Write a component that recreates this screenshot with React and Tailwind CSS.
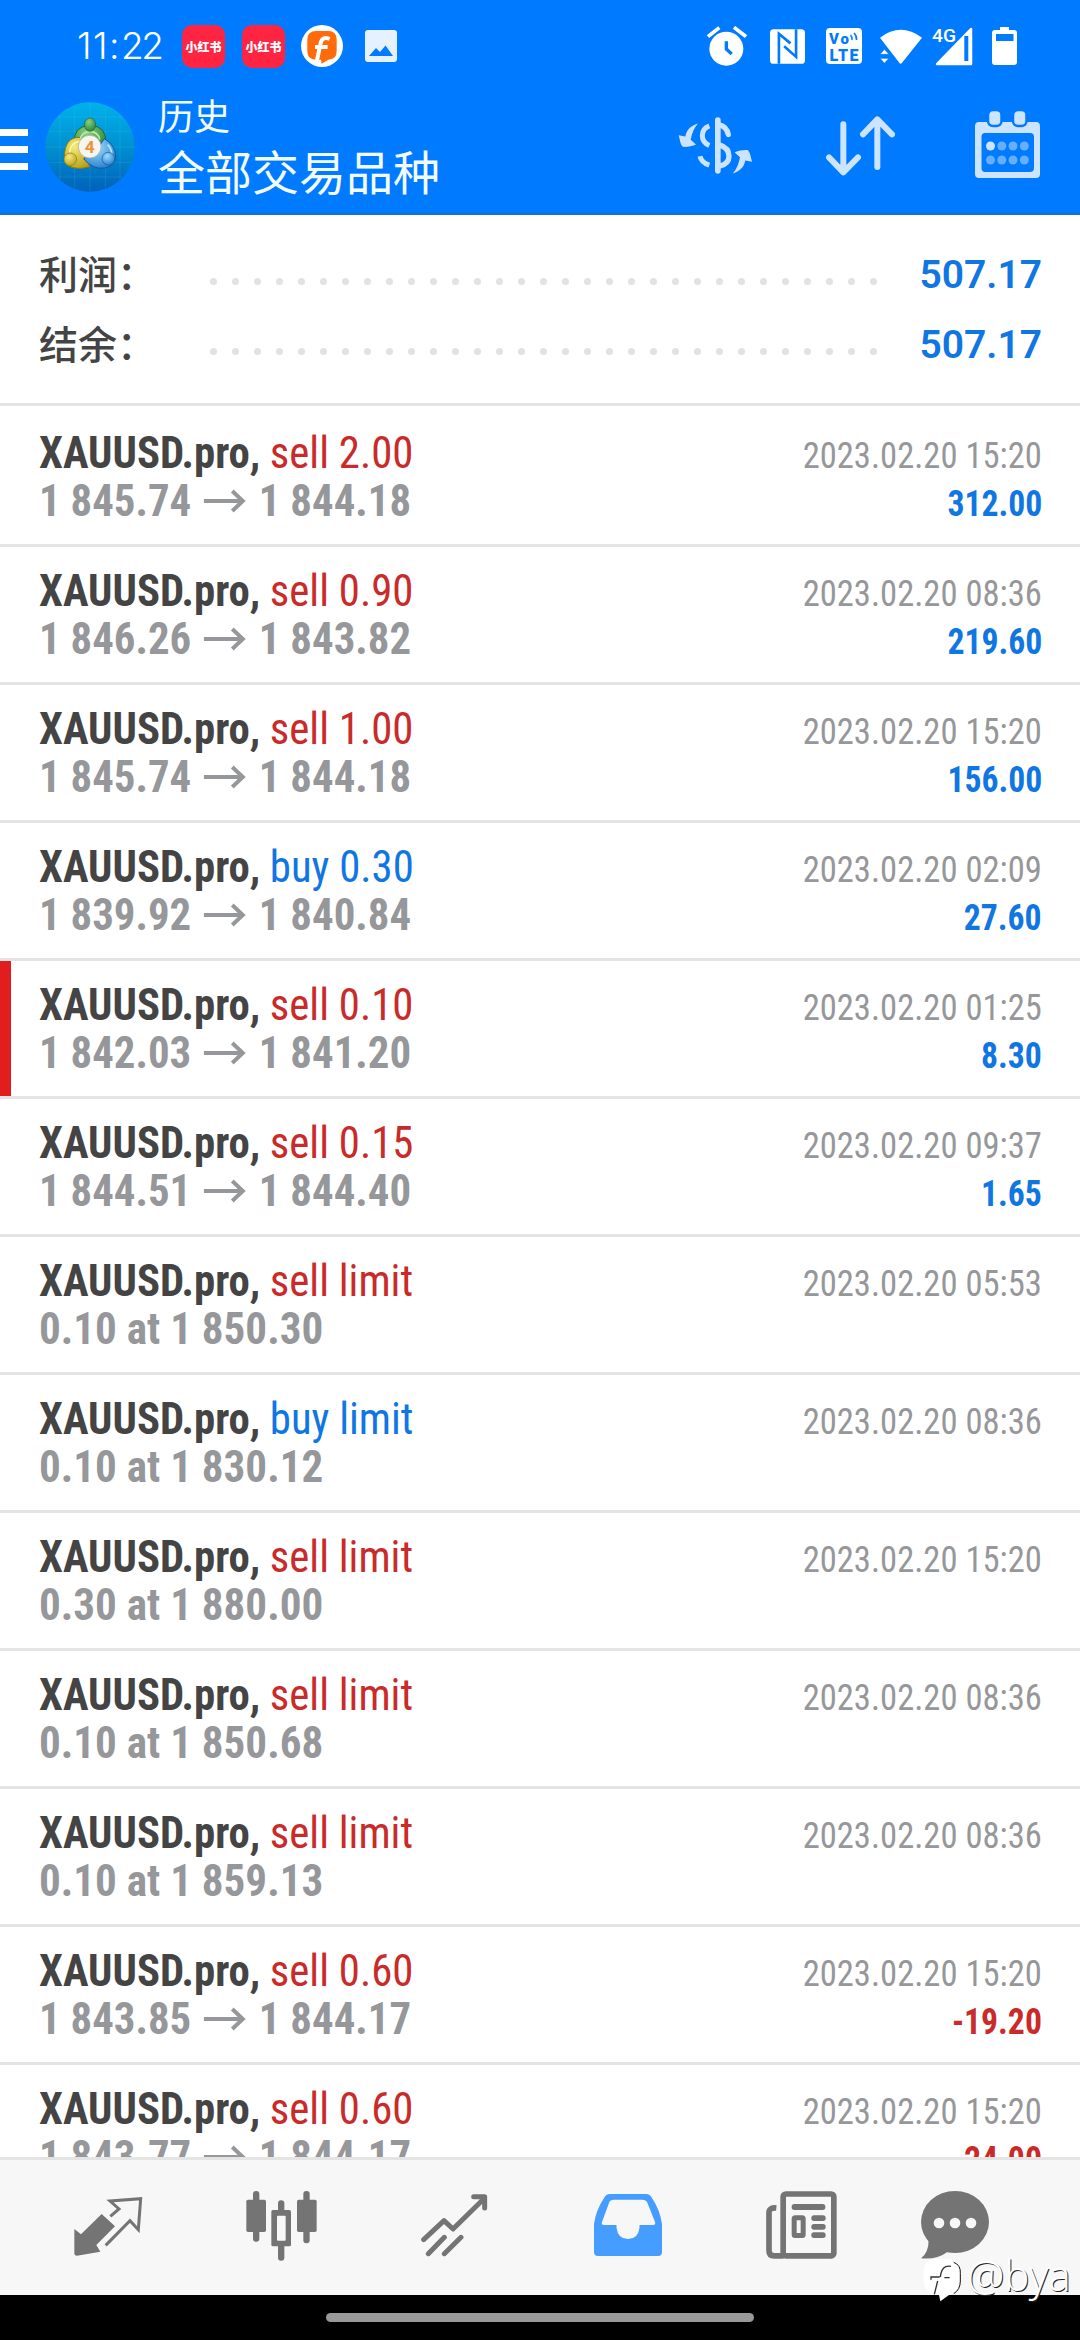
const deals = [
  { type: "sell 2.00", side: "sell", from: "1 845.74", to: "1 844.18", time: "2023.02.20 15:20", profit: "312.00" },
  { type: "sell 0.90", side: "sell", from: "1 846.26", to: "1 843.82", time: "2023.02.20 08:36", profit: "219.60" },
  { type: "sell 1.00", side: "sell", from: "1 845.74", to: "1 844.18", time: "2023.02.20 15:20", profit: "156.00" },
  { type: "buy 0.30", side: "buy", from: "1 839.92", to: "1 840.84", time: "2023.02.20 02:09", profit: "27.60" },
  { type: "sell 0.10", side: "sell", from: "1 842.03", to: "1 841.20", time: "2023.02.20 01:25", profit: "8.30", marked: true },
  { type: "sell 0.15", side: "sell", from: "1 844.51", to: "1 844.40", time: "2023.02.20 09:37", profit: "1.65" },
  { type: "sell limit", side: "sell", order: "0.10 at 1 850.30", time: "2023.02.20 05:53" },
  { type: "buy limit", side: "buy", order: "0.10 at 1 830.12", time: "2023.02.20 08:36" },
  { type: "sell limit", side: "sell", order: "0.30 at 1 880.00", time: "2023.02.20 15:20" },
  { type: "sell limit", side: "sell", order: "0.10 at 1 850.68", time: "2023.02.20 08:36" },
  { type: "sell limit", side: "sell", order: "0.10 at 1 859.13", time: "2023.02.20 08:36" },
  { type: "sell 0.60", side: "sell", from: "1 843.85", to: "1 844.17", time: "2023.02.20 15:20", profit: "-19.20" },
  { type: "sell 0.60", side: "sell", from: "1 843.77", to: "1 844.17", time: "2023.02.20 15:20", profit: "-24.00" },
];

const summary = [
  { label: "利润：", value: "507.17" },
  { label: "结余：", value: "507.17" },
];

function RedNote() {
  return (
    <div className="w-[43px] h-[43px] rounded-[10px] bg-[#ff2442] flex items-center justify-center text-white text-[12px] leading-none font-black whitespace-nowrap font-['Noto_Sans_CJK_SC',sans-serif]">
      小红书
    </div>
  );
}

function StatusBar() {
  return (
    <div className="h-[92px] flex items-start text-white">
      <div className="w-[105px] ml-[77px] mt-[23px] flex items-center text-[37px] leading-[46px] font-light font-['Inter','Noto_Sans',sans-serif]">
        <span className="tracking-[1.5px]">11:</span>
        <span className="-tracking-[2.5px]">22</span>
      </div>
      <div className="mt-[25px]"><RedNote /></div>
      <div className="mt-[25px] ml-[17px]"><RedNote /></div>
      <svg className="w-[42px] h-[42px] mt-[25px] ml-[16px]" viewBox="0 0 126 126">
        <circle cx="63" cy="63" r="63" fill="#fff" />
        <path d="M46 18H82Q107 18 107 44V78Q107 104 82 104L62 116L60 104H44Q19 104 19 78V44Q19 18 46 18Z" fill="#ff6a0a" />
        <path d="M86 42Q62 32 58 58L48 106M42 66H80" fill="none" stroke="#fff" strokeWidth="12" />
      </svg>
      <svg className="w-[32px] h-[32px] mt-[30px] ml-[22px]" viewBox="0 0 32 32">
        <rect width="32" height="32" rx="3" fill="#e6f1ff" />
        <path d="M4 26L11 18L15 22L20.500 15.500L28 26Z" fill="#007aff" />
      </svg>
      <svg className="w-[40px] h-[40px] mt-[26px] ml-[310px]" viewBox="0 0 120 120">
        <circle cx="58" cy="68" r="51" fill="#fff" />
        <path d="M3 32L37 5M81 4L117 32" stroke="#fff" strokeWidth="11" />
        <path d="M58 46V69L74 84" fill="none" stroke="#007aff" strokeWidth="10" />
      </svg>
      <svg className="w-[35px] h-[35px] mt-[29px] ml-[23px]" viewBox="0 0 106 105">
        <rect width="106" height="105" rx="11" fill="#fff" />
        <path d="M27 105V14L62 43M43 52L79 84V0" fill="none" stroke="#007aff" strokeWidth="8" />
      </svg>
      <svg className="w-[36px] h-[36px] mt-[28px] ml-[21px]" viewBox="0 0 36 36">
        <rect width="36" height="36" rx="4" fill="#fff" />
        <g className="font-['Roboto',sans-serif] font-black" fill="#007aff">
          <text x="3" y="15.500" fontSize="15" textLength="20">Vo</text>
          <text x="3.500" y="32.500" fontSize="16" textLength="29">LTE</text>
        </g>
        <path d="M24.500 7Q26.500 9 26 12M28 5Q31 8 30.500 12" fill="none" stroke="#007aff" strokeWidth="1.600" />
      </svg>
      <svg className="w-[42px] h-[36px] mt-[28px] ml-[18px]" viewBox="0 0 126 108">
        <path d="M0 29Q62 -18 126 29L65 106Q62 108 59 106Z" fill="#fff" />
        <path d="M0 79L13 64L27 79ZM0 91H27L13 106Z" fill="#fff" stroke="#007aff" strokeWidth="2" />
      </svg>
      <svg className="w-[41px] h-[40px] mt-[26px] ml-[10px]" viewBox="0 0 41 40">
        <text x="0" y="15.500" fontSize="18" textLength="24" lengthAdjust="spacingAndGlyphs" fill="#fff" className="font-['Roboto',sans-serif] font-medium">4G</text>
        <path d="M5 38L39 3V38Z" fill="#fff" stroke="#fff" strokeWidth="2.500" strokeLinejoin="round" />
        <path d="M34.300 10V35" stroke="#007aff" strokeWidth="4" />
      </svg>
      <svg className="w-[25px] h-[38px] mt-[27px] ml-[19px]" viewBox="0 0 25 38">
        <path d="M8 0H17V3H22Q25 3 25 6V35Q25 38 22 38H3Q0 38 0 35V6Q0 3 3 3H8Z" fill="#fff" />
        <rect x="4" y="7" width="17.500" height="7" fill="#007aff" />
      </svg>
    </div>
  );
}

function Logo() {
  return (
    <svg className="w-[90px] h-[90px]" viewBox="0 0 270 270">
      <defs>
        <linearGradient id="bg" x1="0" y1="0" x2="0" y2="1">
          <stop offset="0" stopColor="#00b2ea" />
          <stop offset="0.5" stopColor="#0090d2" />
          <stop offset="1" stopColor="#0061b8" />
        </linearGradient>
        <radialGradient id="green" cx="0.4" cy="0.3" r="0.8">
          <stop offset="0" stopColor="#8fd080" />
          <stop offset="1" stopColor="#1f7d33" />
        </radialGradient>
        <radialGradient id="yellow" cx="0.4" cy="0.3" r="0.8">
          <stop offset="0" stopColor="#f5ea7c" />
          <stop offset="1" stopColor="#b59c12" />
        </radialGradient>
        <radialGradient id="blue" cx="0.4" cy="0.3" r="0.8">
          <stop offset="0" stopColor="#9fdcff" />
          <stop offset="1" stopColor="#1d78c8" />
        </radialGradient>
      </defs>
      <circle cx="135" cy="135" r="134" fill="url(#bg)" />
      <path d="M45 38V232M89 12V258M135 2V268M181 12V258M225 38V232M38 45H232M12 89H258M2 135H268M12 181H258M38 225H232" stroke="#5cc4f0" strokeOpacity="0.35" strokeWidth="1.500" />
      <path d="M88 124Q84 72 135 70Q186 72 182 124L168 146H106Z" fill="url(#green)" stroke="#1c6a35" strokeWidth="3" />
      <path d="M106 106Q72 104 62 136Q52 172 66 190Q96 206 134 194L120 150Z" fill="url(#yellow)" stroke="#8a7a10" strokeWidth="3" />
      <path d="M178 110Q210 128 212 162Q212 190 180 198Q142 204 116 170L150 150Z" fill="url(#blue)" stroke="#135a9c" strokeWidth="3" />
      <path d="M106 112Q110 90 135 88Q160 90 164 112" fill="none" stroke="#b8e8a8" strokeWidth="5" />
      <path d="M74 152Q76 122 104 118" fill="none" stroke="#fff7a8" strokeWidth="5" />
      <path d="M188 128Q202 144 200 160" fill="none" stroke="#b8e6ff" strokeWidth="5" />
      <ellipse cx="135" cy="68" rx="17" ry="20" fill="url(#green)" stroke="#1c6a35" strokeWidth="2" />
      <circle cx="76" cy="172" r="19" fill="url(#yellow)" stroke="#8a7a10" strokeWidth="2" />
      <circle cx="190" cy="170" r="19" fill="url(#blue)" stroke="#135a9c" strokeWidth="2" />
      <circle cx="134" cy="134" r="34" fill="#f7f5f0" stroke="#a5a99a" strokeWidth="2" />
      <text x="134" y="152" fontSize="52" textAnchor="middle" fill="#f0913a" className="font-['Roboto',sans-serif] font-bold">4</text>
    </svg>
  );
}

function Header() {
  return (
    <div className="h-[123px] flex items-start border-b-2 border-[#1670d6]">
      <div className="w-[28px] mt-[37px] flex flex-col gap-[10px]">
        <div className="h-[7px] bg-white"></div>
        <div className="h-[7px] bg-white"></div>
        <div className="h-[7px] bg-white"></div>
      </div>
      <div className="ml-[17px] mt-[10px]"><Logo /></div>
      <div className="ml-[23px] w-[520px] text-[#f2fcff] font-['Noto_Sans_CJK_SC',sans-serif]">
        <p className="mt-[2px] text-[36px] leading-[40px]">历史</p>
        <p className="mt-[6px] text-[47px] leading-[60px]">全部交易品种</p>
      </div>
      <svg className="w-[74px] h-[57px] mt-[25px]" viewBox="24 36 222 170">
        <g fill="none" stroke="#cce4ff">
          <path d="M143.500 45V197" strokeWidth="17" strokeLinecap="round" />
          <path d="M148 59Q170 64 175 88" strokeWidth="16" strokeLinecap="round" />
          <path d="M148 119Q177 128 177 153Q177 176 148 183" strokeWidth="16" />
          <path d="M118 62Q97 70 97 91Q97 112 118 121" strokeWidth="15" />
          <path d="M90 153Q94 172 118 180" strokeWidth="15" />
        </g>
        <g fill="#cce4ff">
          <path d="M84 55C66 60 50 72 46 94L26 90C30 104 30 116 38 125C50 126 66 124 78 118L62 104C66 84 72 68 84 55Z" />
          <path d="M84 55C66 60 50 72 46 94L26 90C30 104 30 116 38 125C50 126 66 124 78 118L62 104C66 84 72 68 84 55Z" transform="rotate(180 136 130)" />
        </g>
      </svg>
      <svg className="w-[69px] h-[60px] mt-[24px] ml-[74px]" viewBox="470 35 207 180">
        <path d="M522 60V202M479 159L522 204L566 159M624 188V46M581 90L624 45L668 90" fill="none" stroke="#cce4ff" strokeWidth="18" strokeLinecap="round" strokeLinejoin="round" />
      </svg>
      <svg className="w-[65px] h-[68px] mt-[19px] ml-[80px]" viewBox="0 0 65 68">
        <path fillRule="evenodd" d="M4 11H61Q65 11 65 15V63Q65 67 61 67H4Q0 67 0 63V15Q0 11 4 11ZM10 22Q6.500 22 6.500 26V57Q6.500 61 10 61H55Q59 61 59 57V26Q59 22 55 22Z" fill="#cce4ff" />
        <rect x="13" y="-1" width="13.500" height="16" rx="5" fill="#cce4ff" stroke="#007aff" strokeWidth="2.500" />
        <rect x="38" y="-1" width="13.500" height="16" rx="5" fill="#cce4ff" stroke="#007aff" strokeWidth="2.500" />
        <circle cx="15.500" cy="35" r="4.500" fill="#cce4ff" />
        <g fill="#66aeff">
          <circle cx="26.800" cy="35" r="4.500" />
          <circle cx="38" cy="35" r="4.500" />
          <circle cx="49.300" cy="35" r="4.500" />
          <circle cx="15.500" cy="49" r="4.500" />
          <circle cx="26.800" cy="49" r="4.500" />
          <circle cx="38" cy="49" r="4.500" />
          <circle cx="49.300" cy="49" r="4.500" />
        </g>
      </svg>
    </div>
  );
}

function Summary() {
  return (
    <div className="h-[191px] pt-[22px] pl-[39px] pr-[38px] border-b-3 border-[#e4e4e4]">
      {summary.map((item) => (
        <div key={item.label} className="h-[70px] flex items-center">
          <span className="w-[171px] text-[39px] leading-[60px] font-medium text-[#444] font-['Noto_Sans_CJK_SC',sans-serif]">{item.label}</span>
          <div className="w-[667px] pt-[18px] flex justify-between">
            {Array.from({ length: 31 }, (_, i) => (
              <span key={i} className="size-[7px] rounded-full bg-[#e2e2e2]"></span>
            ))}
          </div>
          <span className="flex-1 pt-[5px] text-right text-[39px] leading-[60px] font-semibold text-[#0f76e2] font-['Roboto',sans-serif]">{item.value}</span>
        </div>
      ))}
    </div>
  );
}

function Arrow() {
  return (
    <svg className="w-[45px] h-[24px] mx-[13px]" viewBox="0 0 45 24">
      <path d="M0 12H42M30 2L41 12L30 22" fill="none" stroke="#96979a" strokeWidth="4.200" />
    </svg>
  );
}

function Deal({ deal }) {
  return (
    <div className="h-[138px] shrink-0 flex border-b-3 border-[#e4e4e4] font-['Roboto',sans-serif] font-stretch-condensed">
      <div className={deal.marked ? "w-[11px] bg-[#e21d1d]" : "w-[11px]"}></div>
      <div className="flex-1 pl-[28px] pr-[38px] pt-[20px]">
        <div className="h-[48px] flex justify-between items-baseline leading-[48px] whitespace-nowrap">
          <p className="text-[45px] flex gap-[10px] origin-left scale-x-[0.95]">
            <span className="font-bold text-[#444]">XAUUSD.pro,</span>
            <span className={deal.side === "sell" ? "text-[#c92a2a]" : "text-[#0f76e2]"}>{deal.type}</span>
          </p>
          <p className="text-[37px] text-[#96979a] origin-right scale-x-[0.935]">{deal.time}</p>
        </div>
        <div className="h-[48px] flex justify-between items-baseline leading-[48px] whitespace-nowrap">
          {deal.order ? (
            <p className="text-[45px] font-bold text-[#96979a] origin-left scale-x-[0.957]">{deal.order}</p>
          ) : (
            <p className="text-[45px] font-bold text-[#96979a] flex items-center origin-left scale-x-[0.952]">
              {deal.from}
              <Arrow />
              {deal.to}
            </p>
          )}
          {deal.profit && (
            <p className={deal.profit.startsWith("-") ? "text-[37px] font-bold text-[#c92a2a] origin-right scale-x-[0.91]" : "text-[37px] font-bold text-[#0f76e2] origin-right scale-x-[0.91]"}>
              {deal.profit}
            </p>
          )}
        </div>
      </div>
    </div>
  );
}

function BottomNav() {
  return (
    <div className="h-[138px] flex items-start bg-[#f7f7f7] border-t-3 border-[#e4e4e4]">
      <svg className="w-[70px] h-[60px] mt-[36px] ml-[73px]" viewBox="40 33 210 180">
        <path d="M126 87L166 124L110 180L122 200L52 212Q44 212 44 204V132L64 148Z" fill="#747474" />
        <path d="M152 94L178 72L151 48L243 41L236 134L211 107L138 181" fill="none" stroke="#747474" strokeWidth="9" />
      </svg>
      <svg className="w-[71px] h-[70px] mt-[31px] ml-[103px]" viewBox="557 18 213 210">
        <g fill="#747474">
          <rect x="558" y="44" width="59" height="97" rx="5" />
          <rect x="578" y="18" width="19" height="152" rx="9" />
          <rect x="710" y="44" width="59" height="97" rx="5" />
          <rect x="729" y="18" width="19" height="157" rx="9" />
          <rect x="653" y="46" width="19" height="181" rx="9" />
          <rect x="633" y="75" width="59" height="109" rx="5" />
        </g>
        <rect x="650" y="92" width="26" height="75" rx="3" fill="#f7f7f7" />
      </svg>
      <svg className="w-[67px] h-[64px] mt-[33px] ml-[104px]" viewBox="1082 24 201 192">
        <path d="M1090 164L1151 107L1178 132L1270 42M1104 206L1152 157M1152 206L1202 157M1240 35H1273V69" fill="none" stroke="#747474" strokeWidth="15" strokeLinecap="round" strokeLinejoin="round" />
      </svg>
      <svg className="w-[68px] h-[62px] mt-[34px] ml-[106px]" viewBox="0 0 68 62">
        <path fillRule="evenodd" d="M16 0H52Q56 0 58 4Q66 16 68 30V58Q68 62 64 62H4Q0 62 0 58V30Q2 16 10 4Q12 0 16 0ZM20 5.700Q16 5.700 15 9L8 28Q7 31 10 31H22.500V34Q24 45 34 45Q44 45 45.500 34V31H59Q62 31 61 28L53.500 9Q52 5.700 48 5.700Z" fill="#459dff" />
      </svg>
      <svg className="w-[71px] h-[68px] mt-[31px] ml-[104px]" viewBox="47 33 213 204">
        <rect x="98.500" y="42" width="152" height="185.500" rx="8" fill="none" stroke="#747474" strokeWidth="17" />
        <path d="M78 84Q56 82 56 98V212Q56 227.500 72 227.500H100" fill="none" stroke="#747474" strokeWidth="17" />
        <g fill="#747474">
          <rect x="124" y="72" width="101" height="18" rx="8" />
          <rect x="183" y="106" width="43" height="17" rx="8" />
          <rect x="183" y="132" width="43" height="17" rx="8" />
          <rect x="183" y="157" width="43" height="17" rx="8" />
        </g>
        <rect x="131.500" y="113.500" width="27" height="53" rx="3" fill="none" stroke="#747474" strokeWidth="15" />
      </svg>
      <svg className="w-[68px] h-[68px] mt-[31px] ml-[84px]" viewBox="513 33 204 204">
        <ellipse cx="615" cy="126" rx="102" ry="93" fill="#747474" />
        <path d="M536 180Q536 218 513 235Q560 240 592 216Z" fill="#747474" />
        <circle cx="567" cy="129" r="16" fill="#f7f7f7" />
        <circle cx="615" cy="129" r="16" fill="#f7f7f7" />
        <circle cx="663" cy="129" r="16" fill="#f7f7f7" />
      </svg>
    </div>
  );
}

function Watermark() {
  return (
    <div className="absolute left-[923px] top-[2259px] flex items-start text-white">
      <svg className="w-[40px] h-[43px]" viewBox="0 0 120 129">
        <path d="M34 0H80Q112 4 110 40V66Q110 104 78 108L52 127L48 108Q2 108 2 60V36Q2 4 34 0Z" fill="#fff" />
        <path d="M92 10Q114 18 112 44V66Q112 92 92 104" fill="none" stroke="#111" strokeWidth="3" />
        <path d="M84 22Q56 16 52 54M24 62V54H50M64 56H80M44 66L34 106" fill="none" stroke="#333" strokeWidth="4" />
      </svg>
      <span className="ml-[4px] -mt-[7px] text-[42px] leading-[46px] font-light font-['Noto_Sans',sans-serif] [text-shadow:1px_1px_0_#222]">@bya</span>
    </div>
  );
}

export default function App() {
  return (
    <div className="relative w-[1080px] h-[2340px] flex flex-col overflow-hidden bg-white">
      <div className="bg-[#007aff]">
        <StatusBar />
        <Header />
      </div>
      <Summary />
      <div className="h-[1751px] pt-[3px] flex flex-col overflow-hidden">
        {deals.map((deal, i) => (
          <Deal key={i} deal={deal} />
        ))}
      </div>
      <BottomNav />
      <div className="h-[45px] bg-black flex justify-center pt-[18px]">
        <div className="w-[428px] h-[9px] rounded-full bg-[#999]"></div>
      </div>
      <Watermark />
    </div>
  );
}
